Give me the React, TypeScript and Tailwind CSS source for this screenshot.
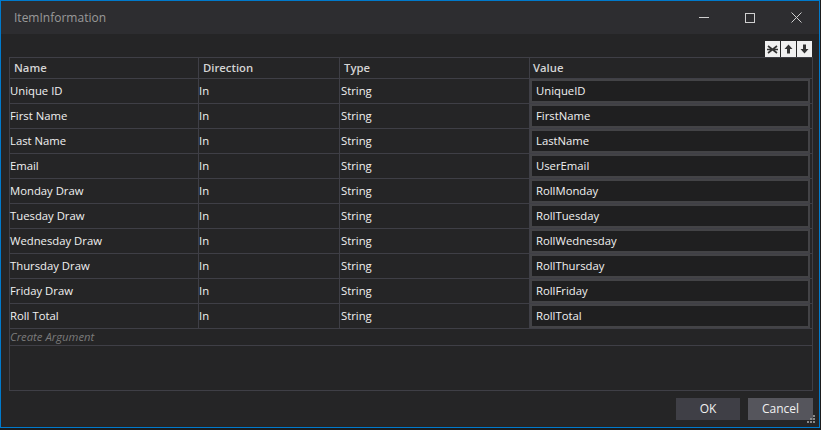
import React from "react"

const rows = [
  ["Unique ID", "UniqueID"],
  ["First Name", "FirstName"],
  ["Last Name", "LastName"],
  ["Email", "UserEmail"],
  ["Monday Draw", "RollMonday"],
  ["Tuesday Draw", "RollTuesday"],
  ["Wednesday Draw", "RollWednesday"],
  ["Thursday Draw", "RollThursday"],
  ["Friday Draw", "RollFriday"],
  ["Roll Total", "RollTotal"],
]

const font = { fontFamily: '"Open Sans", "Noto Sans", "Liberation Sans", sans-serif' }

const ToolButton = ({ children }: { children: React.ReactNode }) => (
  <div className="w-[15px] h-[16px] bg-[#f0f0f0] flex items-center justify-center">
    {children}
  </div>
)

const App = () => {
  return (
    <div
      className="w-[821px] h-[430px] bg-[#1b1b1c] text-[11.3px] text-[#f1f1f1] overflow-hidden"
      style={font}
    >
      <div className="w-[820px] h-[428px] border border-[#007acc] bg-[#252526] flex flex-col">
        {/* title bar */}
        <div className="h-[33px] bg-[#2d2d30] flex items-center shrink-0">
          <span className="pl-[13px] text-[#9a9a9a] text-[12px] flex-1">ItemInformation</span>
          <div className="flex items-center h-full">
            <div className="w-[46px] h-full flex items-center justify-center">
              <div className="w-[10px] h-px bg-[#cfcfcf]" />
            </div>
            <div className="w-[46px] h-full flex items-center justify-center">
              <div className="w-[10px] h-[10px] border border-[#cfcfcf]" />
            </div>
            <div className="w-[46px] h-full flex items-center justify-center">
              <svg width="11" height="11" viewBox="0 0 11 11">
                <path d="M0.5 0.5 L10.5 10.5 M10.5 0.5 L0.5 10.5" stroke="#cfcfcf" strokeWidth="1" />
              </svg>
            </div>
          </div>
        </div>

        {/* toolbar */}
        <div className="flex justify-end pr-[7px] pt-[7px] h-[23px] shrink-0">
          <div className="flex gap-px">
            <ToolButton>
              <svg width="11" height="9" viewBox="0 0 11 9">
                <path d="M1 1 L10 8 M10 1 L1 8 M0 4.5 L11 4.5" stroke="#333" strokeWidth="1.6" />
              </svg>
            </ToolButton>
            <ToolButton>
              <svg width="9" height="10" viewBox="0 0 9 10">
                <path d="M4.5 0.5 L8.5 5 L6 5 L6 9.5 L3 9.5 L3 5 L0.5 5 Z" fill="#333" />
              </svg>
            </ToolButton>
            <ToolButton>
              <svg width="9" height="10" viewBox="0 0 9 10">
                <path d="M4.5 9.5 L8.5 5 L6 5 L6 0.5 L3 0.5 L3 5 L0.5 5 Z" fill="#333" />
              </svg>
            </ToolButton>
          </div>
        </div>

        {/* grid */}
        <div className="ml-[8px] w-[804px] h-[334px] border border-[#3f3f46] flex flex-col shrink-0">
          <div className="grid grid-cols-[189px_141px_190px_1fr] h-[21px] border-b border-[#3f3f46] text-[#d4d4d4] font-semibold">
            <div className="border-r border-[#3f3f46] pl-[4px] flex items-center">Name</div>
            <div className="border-r border-[#3f3f46] pl-[4px] flex items-center">Direction</div>
            <div className="border-r border-[#3f3f46] pl-[4px] flex items-center">Type</div>
            <div className="pl-[3px] flex items-center">Value</div>
          </div>
          {rows.map(([name, value]) => (
            <div
              key={name}
              className="grid grid-cols-[189px_141px_190px_1fr] h-[25px] border-b border-[#3f3f46]"
            >
              <div className="border-r border-[#3f3f46] flex items-center">{name}</div>
              <div className="border-r border-[#3f3f46] flex items-center">In</div>
              <div className="border-r border-[#3f3f46] pl-[1px] flex items-center">String</div>
              <div className="pr-[2px]">
                <div className="h-full border-2 border-[#434346] bg-[#1f1f20] pl-[4px] flex items-center">
                  {value}
                </div>
              </div>
            </div>
          ))}
          <div className="h-[17px] border-b border-[#3f3f46] flex items-center italic text-[#7a7a7a]">
            Create Argument
          </div>
          <div className="flex-1" />
        </div>

        {/* footer */}
        <div className="flex justify-end items-start gap-[8px] pt-[7px] pr-[6px] relative flex-1">
          <button className="w-[64px] h-[22px] bg-[#3f3f46] text-[#f1f1f1] text-[12px]">OK</button>
          <button className="w-[65px] h-[22px] bg-[#55555c] text-[#f1f1f1] text-[12px]">Cancel</button>
          <svg className="absolute right-[3px] bottom-[3px]" width="10" height="10" viewBox="0 0 10 10">
            <g fill="#8a8a8a">
              <rect x="7" y="1" width="2" height="2" />
              <rect x="4" y="4" width="2" height="2" />
              <rect x="7" y="4" width="2" height="2" />
              <rect x="1" y="7" width="2" height="2" />
              <rect x="4" y="7" width="2" height="2" />
              <rect x="7" y="7" width="2" height="2" />
            </g>
          </svg>
        </div>
      </div>
    </div>
  )
}

export default App
